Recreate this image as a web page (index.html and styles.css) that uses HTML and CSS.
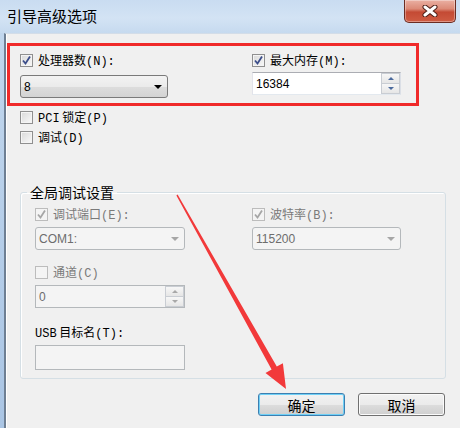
FILE: index.html
```html
<!DOCTYPE html>
<html lang="zh-CN">
<head>
    <meta charset="UTF-8">
    <title>引导高级选项</title>
    <link rel="stylesheet" href="styles.css">
</head>
<body>
    <div class="window">
        <div class="titlebar">
            <span class="title">引导高级选项</span>
            <div class="close">
                <svg width="18" height="12" viewBox="0 0 18 12">
                    <path d="M4 2 L14 10 M14 2 L4 10" stroke="#4a1d16" stroke-width="5" stroke-linecap="round"/>
                    <path d="M4 2 L14 10 M14 2 L4 10" stroke="#fff" stroke-width="3" stroke-linecap="round"/>
                </svg>
            </div>
        </div>

        <div class="client">
            <div class="top-row">
                <div class="col">
                    <label class="check">
                        <span class="box"><svg viewBox="0 0 11 11"><path d="M2 5.5 L4.5 8.5 L9 1.5" class="tick"/></svg></span>
                        <span>处理器数<span class="acc">(N):</span></span>
                    </label>
                    <div class="combo combo-top">
                        <span>8</span>
                        <span class="drop"></span>
                    </div>
                </div>
                <div class="col">
                    <label class="check">
                        <span class="box"><svg viewBox="0 0 11 11"><path d="M2 5.5 L4.5 8.5 L9 1.5" class="tick"/></svg></span>
                        <span>最大内存<span class="acc">(M):</span></span>
                    </label>
                    <div class="spin spin-top">
                        <span class="spin-value">16384</span>
                        <span class="spin-btns"><span class="up"></span><span class="down"></span></span>
                    </div>
                </div>
            </div>

            <label class="check check-pci">
                <span class="box"></span>
                <span><span class="acc">PCI</span> 锁定<span class="acc">(P)</span></span>
            </label>
            <label class="check check-debug">
                <span class="box"></span>
                <span>调试<span class="acc">(D)</span></span>
            </label>

            <fieldset class="group">
                <legend>全局调试设置</legend>
                <div class="group-row">
                    <div class="col">
                        <label class="check disabled">
                            <span class="box"><svg viewBox="0 0 11 11"><path d="M2 5.5 L4.5 8.5 L9 1.5" class="tick"/></svg></span>
                            <span>调试端口<span class="acc">(E):</span></span>
                        </label>
                        <div class="combo combo-group disabled">
                            <span>COM1:</span>
                            <span class="drop"></span>
                        </div>
                    </div>
                    <div class="col">
                        <label class="check disabled">
                            <span class="box"><svg viewBox="0 0 11 11"><path d="M2 5.5 L4.5 8.5 L9 1.5" class="tick"/></svg></span>
                            <span>波特率<span class="acc">(B):</span></span>
                        </label>
                        <div class="combo combo-group disabled">
                            <span>115200</span>
                            <span class="drop"></span>
                        </div>
                    </div>
                </div>

                <label class="check disabled check-channel">
                    <span class="box"></span>
                    <span>通道<span class="acc">(C)</span></span>
                </label>
                <div class="spin spin-channel disabled">
                    <span class="spin-value">0</span>
                    <span class="spin-btns"><span class="up"></span><span class="down"></span></span>
                </div>

                <div class="field-label"><span class="acc">USB</span> 目标名<span class="acc">(T):</span></div>
                <div class="textbox disabled"></div>
            </fieldset>

            <div class="buttons">
                <button class="btn default">确定</button>
                <button class="btn">取消</button>
            </div>
        </div>

        <!-- annotation drawn over the dialog -->
        <svg class="annot" width="460" height="428" viewBox="0 0 460 428">
            <rect x="8.5" y="44.5" width="409" height="60" fill="none" stroke="#f02a2a" stroke-width="3"/>
            <polygon points="177.6,194.6 276.8,366.6 282.9,363.2 286,389 265.5,373 271.6,369.6 176.4,195.4" fill="#f2393a"/>
        </svg>
    </div>
</body>
</html>
```

FILE: styles.css
```css
* {
    box-sizing: border-box;
}
body {
    margin: 0;
    width: 460px;
    height: 428px;
    overflow: hidden;
    font-family: "Noto Sans CJK SC", sans-serif;
    font-size: 12px;
    color: #000;
}
.window {
    position: relative;
    width: 460px;
    height: 428px;
    display: flex;
    flex-direction: column;
    background: linear-gradient(#c3d8ee, #aac5e4); /* aero frame */
}
.titlebar {
    height: 33px;
    display: flex;
    justify-content: space-between;
    align-items: flex-start;
    padding-left: 7px;
    background: linear-gradient(#c9dcf1, #d3e3f4 55%, #c6daef);
}
.title {
    font-size: 15px;
    line-height: 16px;
    margin-top: 8px;
}
.close {
    width: 52px;
    height: 23px;
    margin-right: 4px;
    border: 1px solid #6b2c22;
    border-top: none;
    border-radius: 0 0 5px 5px;
    background: linear-gradient(#eab0a3, #dc8a77 40%, #c44a34 55%, #cf5c43);
    box-shadow: inset 0 0 0 1px rgba(255, 255, 255, 0.35);
    display: flex;
    align-items: center;
    justify-content: center;
}
.client {
    flex: 1;
    margin-left: 4px;
    border-left: 2px solid #6e7f93;
    border-top: 1px solid #d3dde8;
    background: #f0f0f0;
    box-shadow: inset 1px 0 #fff;
    padding: 20px 14px 0 14px;
}

/* checkboxes */
.check {
    display: flex;
    align-items: center;
    gap: 5px;
    height: 13px;
    line-height: 13px;
    white-space: nowrap;
}
.box {
    flex: none;
    width: 13px;
    height: 13px;
    border: 1px solid #8f8f8f;
    background: linear-gradient(135deg, #d8d8d8, #f9f9f9);
    box-shadow: inset 0 0 0 1px #f4f4f4;
    display: flex;
    align-items: center;
    justify-content: center;
}
.box svg {
    width: 11px;
    height: 11px;
}
.tick {
    fill: none;
    stroke: #3b4d8a;
    stroke-width: 1.8;
}
.acc {
    font-family: "Liberation Mono", monospace;
}
.check.disabled {
    color: #7a7a7a;
}
.check.disabled .box {
    border-color: #bcbcbc;
    background: #f4f4f4;
}
.check.disabled .tick {
    stroke: #a6a6a6;
}

/* top row */
.top-row {
    display: grid;
    grid-template-columns: 232px 1fr;
}
.combo {
    height: 23px;
    display: flex;
    align-items: center;
    justify-content: space-between;
    padding: 0 5px 0 3px;
    border: 1px solid #7a7a7a;
    border-radius: 3px;
    background: linear-gradient(#f3f3f3, #ebebeb 50%, #dddddd 51%, #d3d3d3);
    font-family: "Liberation Sans", sans-serif;
    font-size: 12px;
}
.drop {
    width: 0;
    height: 0;
    border-left: 4px solid transparent;
    border-right: 4px solid transparent;
    border-top: 4px solid #000;
}
.combo-top {
    width: 148px;
    margin-top: 8px;
}
.combo.disabled {
    border-color: #b4b8bb;
    background: #f4f4f4;
    color: #6d6d6d;
}
.combo.disabled .drop {
    border-top-color: #a6a6a6;
}

.spin {
    height: 23px;
    display: flex;
    border: 1px solid #abadb3;
    border-left-color: #e2e3ea;
    border-right-color: #dbdfe6;
    border-bottom-color: #e3e9ef;
    background: #fff;
    font-family: "Liberation Sans", sans-serif;
    font-size: 12px;
}
.spin-value {
    flex: 1;
    display: flex;
    align-items: center;
    padding-left: 3px;
}
.spin-btns {
    width: 19px;
    display: flex;
    flex-direction: column;
}
.spin-btns span {
    flex: 1;
    display: flex;
    align-items: center;
    justify-content: center;
    border: 1px solid #c9cdd3;
    background: linear-gradient(#f7f7f7, #e6e6e6);
}
.spin-btns .down {
    border-top: none;
}
.up::before,
.down::before {
    content: "";
    border-left: 3px solid transparent;
    border-right: 3px solid transparent;
}
.up::before {
    border-bottom: 3px solid #4b6a9d;
}
.down::before {
    border-top: 3px solid #4b6a9d;
}
.spin-top {
    width: 149px;
    margin-top: 5px;
}
.spin.disabled {
    border-color: #b4b8bb;
    background: #f4f4f4;
    color: #6d6d6d;
}
.spin.disabled .up::before {
    border-bottom-color: #a8a8a8;
}
.spin.disabled .down::before {
    border-top-color: #a8a8a8;
}

.check-pci {
    margin-top: 13px;
}
.check-debug {
    margin-top: 7px;
}

/* group box */
.group {
    margin: 40px 0 0;
    padding: 8px 0 8px 14px;
    min-width: 0;
    width: 426px;
    border: 1px solid #d5dfe5;
    border-radius: 3px;
    box-shadow: inset 1px 1px #fff;
}
.group legend {
    margin-left: -8px;
    padding: 0 3px;
    font-size: 14px;
    line-height: 16px;
}
.group-row {
    display: grid;
    grid-template-columns: 217px 1fr;
}
.combo-group {
    margin-top: 6px;
    width: 150px;
}
.group-row .col + .col .combo-group {
    width: 149px;
}
.check-channel {
    margin-top: 16px;
}
.spin-channel {
    width: 150px;
    margin-top: 6px;
}
.field-label {
    margin-top: 17px;
    line-height: 14px;
    white-space: nowrap;
}
.textbox {
    width: 150px;
    height: 25px;
    margin-top: 4px;
    border: 1px solid #b4b8bb;
    background: #f4f4f4;
}

/* buttons */
.buttons {
    display: flex;
    justify-content: flex-end;
    gap: 13px;
    margin: 14px 1px 0 0;
}
.btn {
    width: 87px;
    height: 23px;
    padding: 0;
    border: 1px solid #707070;
    border-radius: 3px;
    background: linear-gradient(#f2f2f2, #ebebeb 50%, #dddddd 51%, #cfcfcf);
    box-shadow: inset 0 0 0 1px #fbfbfb;
    font-family: "Noto Sans CJK SC", sans-serif;
    font-size: 14px;
    line-height: 20px;
    color: #000;
}
.btn.default {
    border-color: #3c7fb1;
    box-shadow: inset 0 0 0 1px #6fd0f6;
}

.annot {
    position: absolute;
    left: 0;
    top: 0;
    pointer-events: none;
}
```
